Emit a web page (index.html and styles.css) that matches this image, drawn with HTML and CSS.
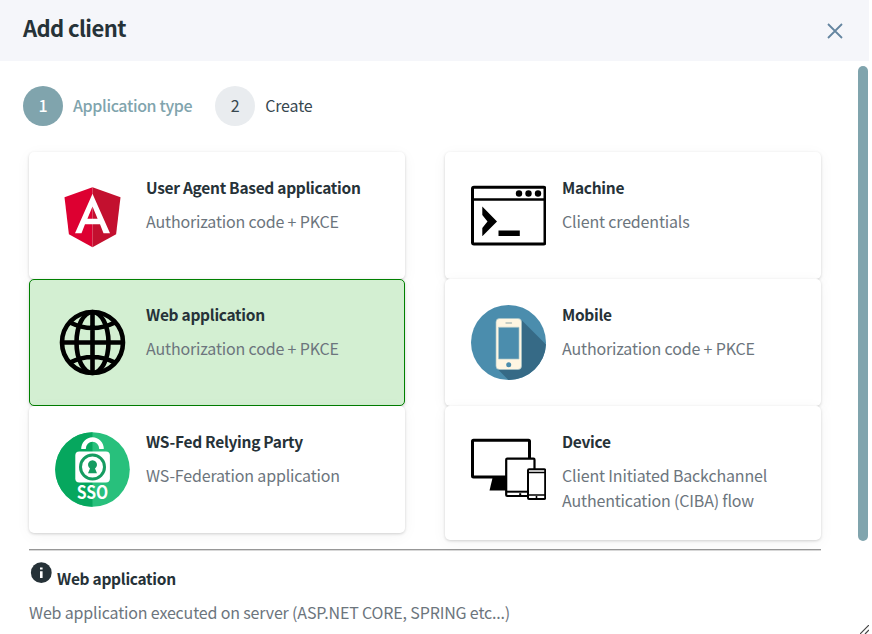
FILE: index.html
```html
<!DOCTYPE html>
<html lang="en">
<head>
<meta charset="utf-8">
<title>Add client</title>
<link rel="stylesheet" href="styles.css">
</head>
<body>
<div class="dialog">
  <header class="header">
    <h1 class="title">Add client</h1>
    <svg class="close" viewBox="0 0 16 16"><path d="M1 1L15 15M15 1L1 15" stroke="#6485a0" stroke-width="1.8" fill="none"/></svg>
  </header>
  <main class="body">
    <ol class="steps">
      <li class="step active"><span class="num">1</span><span class="label type">Application type</span></li>
      <li class="step"><span class="num">2</span><span class="label create">Create</span></li>
    </ol>
    <div class="grid">
      <div class="col">
        <section class="card">
          <svg class="pic" viewBox="0 0 75 75">
            <path fill="#dd0031" d="M37.500 9.300L9.500 19.200l4.400 37L37.500 69.300z"/>
            <path fill="#c3102f" d="M37.500 9.300L65.500 19.200l-4.400 37L37.500 69.300z"/>
            <path fill="#fff" fill-rule="evenodd" d="M37.500 15.800L20 55.300h6.500l3.500-9h15l3.500 9H55zM37.500 28.400L42.600 40.800H32.400z"/>
          </svg>
          <div class="text"><h2>User Agent Based application</h2><p>Authorization code + PKCE</p></div>
        </section>
        <section class="card selected">
          <svg class="pic" viewBox="0 0 75 75" fill="none" stroke="#000" stroke-width="4.600">
            <circle cx="37.500" cy="37.500" r="30.500"/>
            <ellipse cx="37.500" cy="37.500" rx="16" ry="30.500"/>
            <path d="M37.500 7v61M7 37.500h61M15 17.500Q37.500 28.500 60 17.500M15 57.500Q37.500 46.500 60 57.500"/>
          </svg>
          <div class="text"><h2>Web application</h2><p>Authorization code + PKCE</p></div>
        </section>
        <section class="card">
          <svg class="pic" viewBox="0 0 75 75">
            <circle cx="37.500" cy="37.500" r="37.300" fill="#28c07c"/>
            <path d="M37.500.2a37.300 37.300 0 0 0 0 74.600z" fill="#06a75e"/>
            <path d="M28.500 17a9 9.500 0 0 1 18 0" fill="none" stroke="#fff" stroke-width="4.600"/>
            <rect x="20.300" y="19.500" width="34.600" height="31" rx="4" fill="#fff"/>
            <circle cx="37.500" cy="35" r="12" fill="none" stroke="#159c60" stroke-width="3"/>
            <path d="M33 41.200l2-4.700a4.500 4.500 0 1 1 5 0l2 4.700z" fill="#159c60"/>
            <text class="sso" x="37.500" y="67" text-anchor="middle" textLength="31.500" lengthAdjust="spacingAndGlyphs">SSO</text>
          </svg>
          <div class="text"><h2>WS-Fed Relying Party</h2><p>WS-Federation application</p></div>
        </section>
      </div>
      <div class="col">
        <section class="card">
          <svg class="pic" viewBox="0 0 75 75">
            <rect x="1.500" y="9.300" width="72.500" height="56.700" rx="1.500" fill="none" stroke="#000" stroke-width="3"/>
            <path d="M1.500 21.500h72" stroke="#000" stroke-width="2.600"/>
            <circle cx="48" cy="15.500" r="3.200"/><circle cx="57.500" cy="15.500" r="3.200"/><circle cx="67" cy="15.500" r="3.200"/>
            <path d="M11.300 28.500l14.700 15-14.700 14.800v-8.300l5.200-6.500-5.200-6.500zM27.500 52.500h21.300v5.500h-21.300z"/>
          </svg>
          <div class="text"><h2>Machine</h2><p>Client credentials</p></div>
        </section>
        <section class="card">
          <svg class="pic" viewBox="0 0 75 75">
            <circle cx="37.500" cy="37.500" r="37.500" fill="#4b8dad"/>
            <path d="M50.500 15L75 39.500A37.500 37.500 0 0 1 37.500 75L26 63.500z" fill="#366a86"/>
            <rect x="25" y="13.500" width="25.500" height="51" rx="3.500" fill="#fff6e2" stroke="#a8c4c8" stroke-width=".7"/>
            <path d="M27.500 22.300h20.500v31.700H27.500z" fill="#4b8dad" stroke="#a8c4c8" stroke-width=".7"/>
            <path d="M35 18h5.500" stroke="#b2c0bb" stroke-width="1.300" stroke-linecap="round"/>
            <circle cx="37.700" cy="59.700" r="2.500" fill="#4b8dad"/>
          </svg>
          <div class="text"><h2>Mobile</h2><p>Authorization code + PKCE</p></div>
        </section>
        <section class="card last">
          <svg class="pic" viewBox="0 0 75 75">
            <path d="M22 44h14v14.500H18.500z"/>
            <rect x="1.500" y="8.200" width="57" height="36.800" rx="1" fill="#fff" stroke="#000" stroke-width="3"/>
            <rect x="35.200" y="26.700" width="28.300" height="37.300" rx="1" fill="#fff" stroke="#000" stroke-width="2.200"/>
            <path d="M35 59.700h28" stroke="#000" stroke-width="2"/>
            <path d="M48.200 61.200h2v2h-2z"/>
            <rect x="57" y="37.300" width="17.200" height="29.700" rx="1" fill="#fff" stroke="#000" stroke-width="2"/>
            <path d="M57 40.500h17M57 63h17" stroke="#000" stroke-width="1.300"/>
            <path d="M64.700 64h1.600v2h-1.600z"/>
          </svg>
          <div class="text"><h2>Device</h2><p>Client Initiated Backchannel<br>Authentication (CIBA) flow</p></div>
        </section>
      </div>
    </div>
    <div class="rule"></div>
    <div class="info">
      <svg class="info-icon" viewBox="0 0 22 22"><circle cx="11.300" cy="10.700" r="10.400" fill="#263238"/><path d="M10 9.200h2.600v6.800H10zM10 5.400h2.600v2.200H10z" fill="#fff"/></svg>
      <h2 class="info-title">Web application</h2>
    </div>
    <p class="note">Web application executed on server (ASP.NET CORE, SPRING etc...)</p>
  </main>
  <div class="scrollbar"></div>
  <svg class="grip" viewBox="0 0 9 9"><path d="M0 9L9 0M5 9L9 5" stroke="#444" stroke-width="1.200"/></svg>
</div>
</body>
</html>
```
FILE: styles.css
```css
* { box-sizing: border-box; }
body {
  margin: 0;
  background: #fff;
  color: #263238;
  font-family: "Noto Sans CJK SC", "Noto Sans", sans-serif;
  font-size: 16px;
}
h1, h2, p, ol { margin: 0; padding: 0; }
.dialog { position: relative; width: 872px; height: 634px; overflow: hidden; }
.header {
  display: flex;
  justify-content: space-between;
  width: 869px;
  height: 61px;
  padding: 13px 26px 0 23px;
  background: #f5f6fa;
}
.title { font-size: 22px; line-height: 28px; font-weight: 700; letter-spacing: -.6px; white-space: nowrap; }
.close { width: 16px; height: 16px; margin-top: 9.5px; }
.body { padding: 25px 0 0 23px; }
.steps { display: flex; height: 40px; gap: 23px; list-style: none; }
.step { display: flex; align-items: center; gap: 10px; color: #37474f; }
.num {
  width: 40px;
  height: 40px;
  border-radius: 50%;
  background: #e9ecef;
  line-height: 38px;
  text-align: center;
}
.active { color: #80a4ad; font-weight: 500; }
.active .num { background: #80a4ad; color: #fff; }
.label { height: 40px; line-height: 38px; white-space: nowrap; }
.type { letter-spacing: -.37px; }
.create { letter-spacing: -.15px; }
.grid { display: flex; align-items: flex-start; gap: 40px; padding: 26px 0 0 6px; }
.col { width: 376px; }
.card {
  display: flex;
  gap: 16px;
  height: 127px;
  padding: 26px 0 0 26px;
  border-radius: 5px;
  background: #fff;
  box-shadow: 0 1px 3px rgba(0, 0, 0, .17), 0 3px 16px rgba(0, 0, 0, .045);
}
.selected {
  padding: 25px 0 0 25px;
  border: 1px solid #008000;
  background: #d3efd2;
}
.last { height: 134px; }
.pic { flex: none; width: 75px; height: 75px; }
.text { white-space: nowrap; }
h2 { font-size: 15.5px; line-height: 22px; font-weight: 700; letter-spacing: -.29px; }
.text h2 { margin-top: -2px; }
.text p { margin-top: 11px; line-height: 25px; letter-spacing: -.16px; color: #6c757d; }
.sso { fill: #fff; font-size: 18px; font-weight: 700; }
.rule { width: 792px; height: 2px; margin: 9px 0 0 6px; background: #979797; border-bottom: 1px solid #d8d8d8; }
.info { display: flex; gap: 5px; padding: 11px 0 0 7px; }
.info-icon { width: 22px; height: 22px; }
.info-title { margin-top: 5px; white-space: nowrap; }
.note { margin: 11px 0 0 6px; line-height: 25px; letter-spacing: -.16px; color: #6c757d; white-space: nowrap; }
.scrollbar {
  position: absolute;
  top: 66px;
  left: 858px;
  width: 10px;
  height: 475px;
  border-radius: 5px;
  background: #80a4ad;
}
.grip { position: absolute; left: 860px; top: 625px; width: 9px; height: 9px; }
```
